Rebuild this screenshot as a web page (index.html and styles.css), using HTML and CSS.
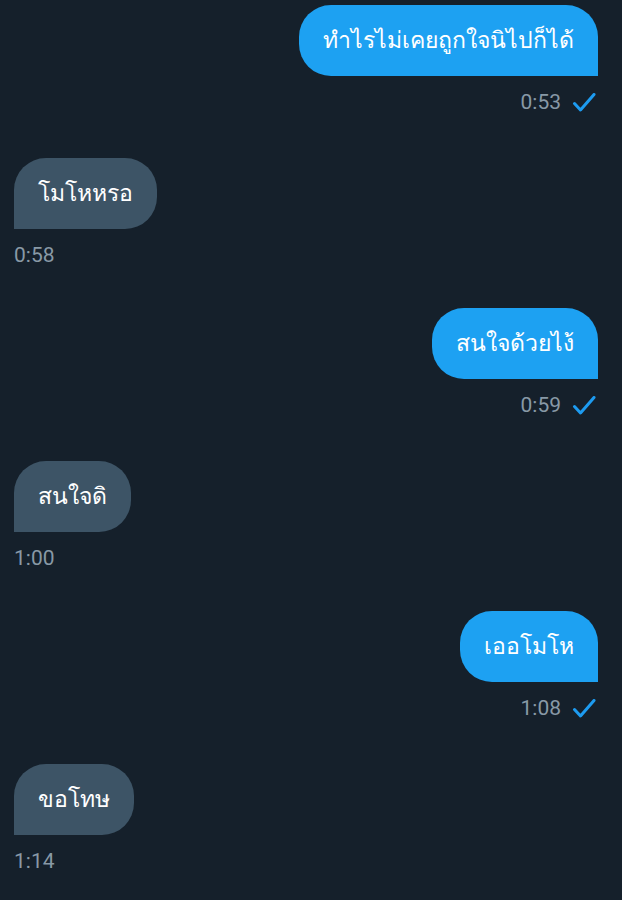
FILE: index.html
```html
<!DOCTYPE html>
<html lang="th">
<head>
<meta charset="utf-8">
<link rel="stylesheet" href="styles.css">
</head>
<body>
<div class="chat">
  <div class="msg out">
    <div class="bubble">ทำไรไม่เคยถูกใจนิไปก็ได้</div>
    <div class="meta"><span class="time">0:53</span><svg class="check" viewBox="0 0 24 20" width="24" height="20"><path d="M2.5 10.5 L8.5 17 L22 1.5" fill="none" stroke="#1d9bf0" stroke-width="3" stroke-linecap="round" stroke-linejoin="round"/></svg></div>
  </div>
  <div class="msg in">
    <div class="bubble">โมโหหรอ</div>
    <div class="meta"><span class="time">0:58</span></div>
  </div>
  <div class="msg out">
    <div class="bubble">สนใจด้วยไง้</div>
    <div class="meta"><span class="time">0:59</span><svg class="check" viewBox="0 0 24 20" width="24" height="20"><path d="M2.5 10.5 L8.5 17 L22 1.5" fill="none" stroke="#1d9bf0" stroke-width="3" stroke-linecap="round" stroke-linejoin="round"/></svg></div>
  </div>
  <div class="msg in">
    <div class="bubble">สนใจดิ</div>
    <div class="meta"><span class="time">1:00</span></div>
  </div>
  <div class="msg out">
    <div class="bubble">เออโมโห</div>
    <div class="meta"><span class="time">1:08</span><svg class="check" viewBox="0 0 24 20" width="24" height="20"><path d="M2.5 10.5 L8.5 17 L22 1.5" fill="none" stroke="#1d9bf0" stroke-width="3" stroke-linecap="round" stroke-linejoin="round"/></svg></div>
  </div>
  <div class="msg in">
    <div class="bubble">ขอโทษ</div>
    <div class="meta"><span class="time">1:14</span></div>
  </div>
</div>
</body>
</html>
```
FILE: styles.css
```css
html, body {
  margin: 0;
  padding: 0;
  background: #15202b;
}
body {
  width: 622px;
  height: 900px;
  overflow: hidden;
  font-family: Roboto, "Noto Sans", sans-serif;
}
.chat {
  display: flex;
  flex-direction: column;
  padding: 5px 24px 0 14px;
}
.msg {
  display: flex;
  flex-direction: column;
}
.msg.out {
  align-items: flex-end;
  margin-bottom: 44px;
}
.msg.in {
  align-items: flex-start;
  margin-bottom: 41px;
}
.bubble {
  font-size: 23px;
  line-height: 31px;
  padding: 20px 24px;
  color: #ffffff;
  border-radius: 32px;
}
.out .bubble {
  background: #1da1f2;
  border-bottom-right-radius: 0;
}
.in .bubble {
  background: #3d5466;
  border-bottom-left-radius: 0;
}
.meta {
  display: flex;
  align-items: center;
  margin-top: 14px;
  height: 24px;
}
.out .meta {
  margin-right: 2px;
}
.time {
  font-size: 21px;
  line-height: 24px;
  color: #8899a6;
}
.check {
  margin-left: 11px;
  margin-top: 2px;
}
```
